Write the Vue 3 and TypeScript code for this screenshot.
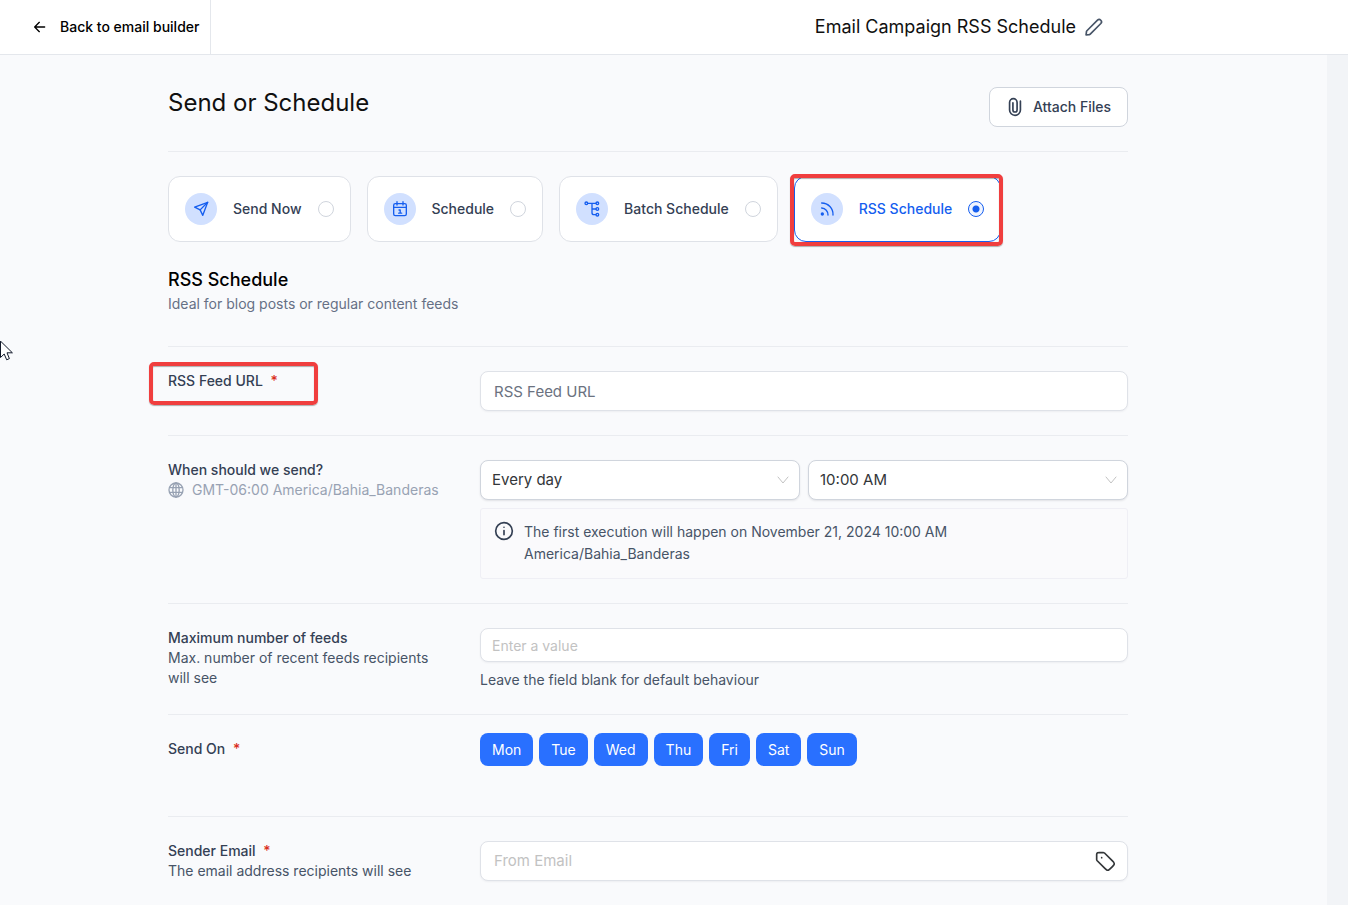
<script setup lang="ts">
import { ref } from 'vue'

type Mode = 'now' | 'schedule' | 'batch' | 'rss'

const modes: { id: Mode; label: string }[] = [
  { id: 'now', label: 'Send Now' },
  { id: 'schedule', label: 'Schedule' },
  { id: 'batch', label: 'Batch Schedule' },
  { id: 'rss', label: 'RSS Schedule' },
]
const mode = ref<Mode>('rss')

const feedUrl = ref('')
const frequency = ref('Every day')
const time = ref('10:00 AM')
const maxFeeds = ref('')
const senderEmail = ref('')

const days = ['Mon', 'Tue', 'Wed', 'Thu', 'Fri', 'Sat', 'Sun']
const activeDays = ref<string[]>([...days])

function toggleDay(day: string) {
  activeDays.value = activeDays.value.includes(day)
    ? activeDays.value.filter((d) => d !== day)
    : [...activeDays.value, day]
}
</script>

<template>
  <div class="page">
    <header class="topbar">
      <a href="#" class="back">
        <svg class="back-icon" viewBox="0 0 24 24" aria-hidden="true"><path d="M19 12H4.500M11 5l-7 7 7 7" /></svg>
        Back to email builder
      </a>
      <div class="campaign">
        <span>Email Campaign RSS Schedule</span>
        <button type="button" class="icon-button" aria-label="Rename campaign">
          <svg class="icon20" viewBox="0 0 24 24" aria-hidden="true"><path d="M2.9 18.1c0-.4.1-.6.1-.8.1-.2.2-.4.5-.8L16.2 3.800a2.830 2.830 0 0 1 4 4L7.500 20.500c-.3.3-.5.4-.7.5-.2.1-.4.1-.8.2L2.500 21.500Z" /></svg>
        </button>
      </div>
    </header>

    <div class="body">
      <main class="content">
        <div class="title-row">
          <h1>Send or Schedule</h1>
          <button type="button" class="attach">
            <svg class="icon20" viewBox="0 0 24 24" aria-hidden="true"><path d="M18.500 5v10.500a6.500 6.500 0 0 1-13 0V6.500a4.500 4.500 0 0 1 9 0v9a2.500 2.500 0 0 1-5 0V7" /></svg>
            Attach Files
          </button>
        </div>

        <div class="modes" role="radiogroup" aria-label="Send mode">
          <label v-for="m in modes" :key="m.id" class="mode" :class="{ selected: mode === m.id }">
            <span class="mode-icon">
              <svg viewBox="0 0 24 24" aria-hidden="true">
                <template v-if="m.id === 'now'">
                  <path d="M22 2 2.500 9.300l8.200 4 4 8.200L22 2Z" />
                  <path d="M22 2 10.700 13.300" />
                </template>
                <template v-else-if="m.id === 'schedule'">
                  <rect x="2.500" y="4" width="19" height="18" rx="2.500" />
                  <path d="M2.500 9.500h19M7.500 1v5M16.500 1v5M10.500 13.500h1.800v4.500M10 18.200h4.500" />
                </template>
                <template v-else-if="m.id === 'batch'">
                  <circle cx="3.500" cy="3.500" r="2" />
                  <circle cx="20" cy="3.500" r="2" />
                  <circle cx="20" cy="12" r="2" />
                  <circle cx="20" cy="20.500" r="2" />
                  <path d="M5.500 3.500H18M12 3.500v14a3 3 0 0 0 3 3h3M12 12h6" />
                </template>
                <template v-else>
                  <path d="M4 3a17 17 0 0 1 17 18M4 10.500A10 10 0 0 1 13.500 21" />
                  <circle class="dot" cx="5" cy="19.500" r="1.500" />
                </template>
              </svg>
            </span>
            <span>{{ m.label }}</span>
            <input v-model="mode" type="radio" name="mode" :value="m.id" />
            <span v-if="m.id === 'rss'" class="marker mode-marker"></span>
          </label>
        </div>

        <div class="intro">
          <h2>RSS Schedule</h2>
          <p>Ideal for blog posts or regular content feeds</p>
        </div>

        <section class="row">
          <div class="info marked">
            <label for="feed-url">RSS Feed URL <span class="required">*</span></label>
            <span class="marker label-marker"></span>
          </div>
          <input id="feed-url" v-model="feedUrl" class="field dark-placeholder" type="url" placeholder="RSS Feed URL" />
        </section>

        <section class="row">
          <div class="info">
            <label for="frequency">When should we send?</label>
            <p class="timezone">
              <svg viewBox="0 0 24 24" aria-hidden="true">
                <circle cx="12" cy="12" r="10.500" />
                <ellipse cx="12" cy="12" rx="4.800" ry="10.500" />
                <path d="M2.500 8.500h19M2.500 15.500h19M12 1.500v21" />
              </svg>
              GMT-06:00 America/Bahia_Banderas
            </p>
          </div>
          <div class="stack">
            <div class="selects">
              <div class="select">
                <select id="frequency" v-model="frequency">
                  <option>Every day</option>
                  <option>Every week</option>
                  <option>Every month</option>
                </select>
                <svg viewBox="0 0 12 12" aria-hidden="true"><path d="M1 3l5 6 5-6" /></svg>
              </div>
              <div class="select">
                <select v-model="time" aria-label="Time">
                  <option>9:00 AM</option>
                  <option>10:00 AM</option>
                  <option>11:00 AM</option>
                </select>
                <svg viewBox="0 0 12 12" aria-hidden="true"><path d="M1 3l5 6 5-6" /></svg>
              </div>
            </div>
            <div class="notice">
              <svg class="icon20" viewBox="0 0 24 24" aria-hidden="true"><circle cx="12" cy="12" r="10" /><path d="M12 16.500V11.500M12 7.500h.01" /></svg>
              <p>The first execution will happen on November 21, 2024 10:00 AM America/Bahia_Banderas</p>
            </div>
          </div>
        </section>

        <section class="row">
          <div class="info">
            <label for="max-feeds">Maximum number of feeds</label>
            <p>Max. number of recent feeds recipients will see</p>
          </div>
          <div class="stack">
            <input id="max-feeds" v-model="maxFeeds" class="field small" type="text" inputmode="numeric" placeholder="Enter a value" />
            <p class="hint">Leave the field blank for default behaviour</p>
          </div>
        </section>

        <section class="row days-row">
          <div class="info"><span id="send-on">Send On <span class="required">*</span></span></div>
          <div class="days" role="group" aria-labelledby="send-on">
            <button
              v-for="day in days"
              :key="day"
              type="button"
              class="day"
              :class="{ on: activeDays.includes(day) }"
              :aria-pressed="activeDays.includes(day)"
              @click="toggleDay(day)"
            >{{ day }}</button>
          </div>
        </section>

        <section class="row">
          <div class="info">
            <label for="sender-email">Sender Email <span class="required">*</span></label>
            <p>The email address recipients will see</p>
          </div>
          <div class="field with-icon">
            <input id="sender-email" v-model="senderEmail" type="email" placeholder="From Email" />
            <button type="button" class="icon-button tag" aria-label="Insert custom value">
              <svg class="icon20" viewBox="0 0 24 24" aria-hidden="true"><path d="M8 8h.01M2 5.200v4.500c0 .5 0 .75.060 1 .05.2.14.4.25.6.12.2.3.37.65.72l8.900 8.900c1.200 1.200 1.800 1.800 2.500 2 .6.2 1.250.2 1.850 0 .7-.2 1.300-.8 2.500-2l2.200-2.200c1.200-1.200 1.800-1.800 2-2.500.2-.6.2-1.250 0-1.850-.2-.7-.8-1.300-2-2.500L12 2.960c-.35-.35-.52-.52-.72-.65a2 2 0 0 0-.6-.25C10.450 2 10.200 2 9.700 2H5.200c-1.100 0-1.700 0-2.100.2a2 2 0 0 0-.9.9C2 3.500 2 4.100 2 5.200Z" /></svg>
            </button>
          </div>
        </section>
      </main>
    </div>

    <svg class="pointer" viewBox="0 0 13 20" aria-hidden="true">
      <path d="M.5.500v16l3.700-3.500 2.500 5.800 2.700-1.200L7 11.800h5Z" />
    </svg>
  </div>
</template>

<style>
body {
  margin: 0;
  background: #f9fafc;
}
</style>

<style scoped>
.page {
  position: relative;
  display: flex;
  flex-direction: column;
  height: 100vh;
  overflow: hidden;
  font-family: Inter, "Liberation Sans", sans-serif;
  font-size: 14px;
  line-height: 20px;
  color: #344054;
}
* {
  box-sizing: border-box;
}
h1, h2, p {
  margin: 0;
}
button, input, select {
  font: inherit;
  color: inherit;
}
button {
  cursor: pointer;
}
svg {
  flex: none;
  fill: none;
  stroke: currentColor;
  stroke-width: 2;
  stroke-linecap: round;
  stroke-linejoin: round;
}
.icon20 {
  width: 20px;
  height: 20px;
}
.icon-button {
  display: flex;
  padding: 0;
  border: 0;
  background: none;
}

.topbar {
  flex: none;
  display: flex;
  justify-content: space-between;
  height: 55px;
  padding-right: 244px;
  background: #fff;
  border-bottom: 1px solid #e4e7ec;
}
.back {
  display: flex;
  align-items: center;
  gap: 12px;
  padding: 0 11px 0 32px;
  border-right: 1px solid #e4e7ec;
  color: #000;
  font-weight: 500;
  text-decoration: none;
}
.back-icon {
  width: 16px;
  height: 16px;
}
.campaign {
  display: flex;
  align-items: center;
  gap: 8px;
  font-size: 18px;
  line-height: 28px;
  color: #101010;
}
.campaign .icon-button {
  color: #475467;
}

.body {
  flex: 1;
  min-height: 0;
  overflow: hidden;
  padding: 32px 31px 0 0;
  border-right: 21px solid #f2f4f7;
  background: #f9fafc;
}
.content {
  max-width: 960px;
  margin: 0 auto;
}
.title-row {
  display: flex;
  justify-content: space-between;
  align-items: flex-start;
  padding-bottom: 24px;
  border-bottom: 1px solid #eaecf0;
}
h1 {
  font-size: 24px;
  line-height: 32px;
  font-weight: 400;
  color: #101010;
}
.attach {
  display: flex;
  align-items: center;
  gap: 8px;
  height: 40px;
  padding: 0 16px 0 15px;
  border: 1px solid #d0d5dd;
  border-radius: 8px;
  background: #fff;
  font-weight: 500;
}
.modes {
  display: flex;
  gap: 16px;
  padding-top: 24px;
}
.mode {
  position: relative;
  display: flex;
  align-items: center;
  gap: 16px;
  height: 66px;
  padding: 0 16px;
  border: 1px solid #dfe2e8;
  border-radius: 12px;
  background: #fff;
  font-weight: 500;
  cursor: pointer;
}
.mode.selected {
  border-color: #155eef;
  color: #155eef;
}
.mode-icon {
  display: grid;
  place-items: center;
  width: 32px;
  height: 32px;
  border-radius: 50%;
  background: #d1e0ff;
  color: #155eef;
}
.mode-icon svg {
  width: 16px;
  height: 16px;
}
.dot {
  fill: currentColor;
}
.mode input {
  appearance: none;
  width: 16px;
  height: 16px;
  margin: 0;
  border: 1px solid #d0d5dd;
  border-radius: 50%;
  background: #fff;
}
.mode input:checked {
  border-color: #155eef;
  background: radial-gradient(circle, #155eef 3px, #eff4ff 4px);
}
.marker {
  position: absolute;
  border: 4px solid #f03e3e;
  border-radius: 5px;
  box-shadow: 0 1px 1px rgba(60, 60, 60, 0.4), inset 0 1px 1px rgba(60, 60, 60, 0.4);
  pointer-events: none;
}
.mode-marker {
  inset: -3px -3px -5px -5px;
}
.marked {
  position: relative;
}
.label-marker {
  top: -9px;
  left: -19px;
  width: 169px;
  height: 43px;
}

.intro {
  padding: 24px 0 32px;
  color: #667085;
}
h2 {
  font-size: 18px;
  line-height: 28px;
  font-weight: 500;
  color: #000;
}

.row {
  display: grid;
  grid-template-columns: 280px 1fr;
  gap: 32px;
  padding: 24px 0;
  border-top: 1px solid #eaecf0;
}
.info label,
.info > span {
  font-weight: 500;
}
.info p {
  color: #475467;
}
.required {
  margin-left: 4px;
  color: #d92d20;
}
.info .timezone {
  display: flex;
  align-items: center;
  gap: 8px;
  color: #98a2b3;
}
.timezone svg {
  width: 16px;
  height: 16px;
}
.stack {
  display: flex;
  flex-direction: column;
  gap: 8px;
}
.field {
  width: 100%;
  height: 40px;
  padding: 0 13px;
  border: 1px solid #dfe2e8;
  border-radius: 8px;
  background: #fff;
  box-shadow: 0 1px 2px rgba(16, 24, 40, 0.05);
  font-size: 15px;
}
::placeholder {
  color: #c2c2c2;
  opacity: 1;
}
.dark-placeholder::placeholder {
  color: #6b7280;
}
.field.small {
  height: 34px;
  padding: 0 11px;
  font-size: 14px;
}
.hint {
  color: #475467;
}
.selects {
  display: grid;
  grid-template-columns: 1fr 1fr;
  gap: 8px;
}
.select {
  display: grid;
  align-items: center;
}
.select select,
.select svg {
  grid-area: 1 / 1;
}
.select select {
  appearance: none;
  width: 100%;
  height: 40px;
  padding: 0 11px;
  border: 1px solid #d0d5dd;
  border-radius: 8px;
  background: #fff;
  box-shadow: 0 1px 2px rgba(16, 24, 40, 0.1);
  font-size: 15px;
  color: #333639;
}
.select svg {
  justify-self: end;
  width: 12px;
  height: 12px;
  margin-right: 11px;
  color: #c2c2c2;
  stroke-width: 1;
  pointer-events: none;
}
.notice {
  display: flex;
  gap: 10px;
  padding: 12px 13px;
  border: 1px solid #efeff5;
  border-radius: 3px;
  background: #fafafc;
  color: #475467;
}
.notice p {
  max-width: 480px;
  padding-bottom: 1px;
  line-height: 22px;
}
.notice svg {
  color: #344054;
}
.days-row {
  padding: 18px 0 50px;
}
.days-row .info {
  padding-top: 6px;
}
.days {
  display: flex;
  gap: 6px;
}
.day {
  height: 33px;
  padding: 0 12px;
  border: 0;
  border-radius: 8px;
  background: #e4e7ec;
}
.day.on {
  background: #2970ff;
  color: #fff;
}
.with-icon {
  display: flex;
  align-items: center;
  padding-right: 12px;
}
.with-icon input {
  flex: 1;
  min-width: 0;
  padding: 0;
  border: 0;
  outline: 0;
  background: none;
}
.tag {
  color: #333639;
}

.pointer {
  position: absolute;
  top: 341px;
  left: 0;
  width: 13px;
  height: 20px;
  fill: #fff;
  stroke: #101828;
  stroke-width: 1;
}
</style>
